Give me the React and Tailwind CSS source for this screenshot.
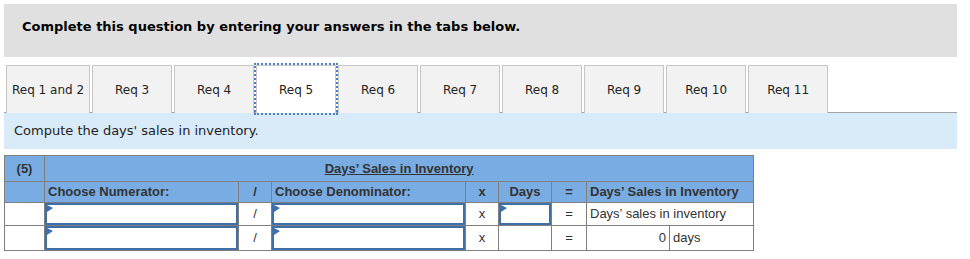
import { useState } from "react";

const tabs = ["Req 1 and 2", "Req 3", "Req 4", "Req 5", "Req 6", "Req 7", "Req 8", "Req 9", "Req 10", "Req 11"];

// little blue flag in the corner of each answer box
function Marker() {
  return (
    <svg className="absolute left-0 top-0" width="6" height="7" viewBox="0 0 6 7">
      <polygon points="0,0 6,3 0,7" fill="#3d6fb0" />
    </svg>
  );
}

function AnswerBox() {
  return (
    <div className="relative h-full w-full border-2 border-[#3f6fa9] bg-white">
      <Marker />
    </div>
  );
}

function App() {
  const [active, setActive] = useState(3);

  return (
    <main className="ml-1 mt-1 w-[953px] bg-white text-[#222]">
      <div className="h-[53px] bg-[#e0e0e0] pl-[18px] pt-[15px] font-['DejaVu_Sans',sans-serif] text-[13px] font-bold leading-[16px] text-black">
        Complete this question by entering your answers in the tabs below.
      </div>

      <div className="mt-2 flex gap-[2px] border-b border-[#a3a3a3] pl-[2px] font-['DejaVu_Sans',sans-serif] text-[12px]">
        {tabs.map((t, i) => (
          <button
            key={t}
            onClick={() => setActive(i)}
            className={
              "-mb-px flex h-[48px] items-center justify-center whitespace-nowrap border border-b-0 border-[#c6c6c6] px-[5px] " +
              (i === 0 ? "min-w-[84px] " : "w-[80px] ") +
              (i === active
                ? "relative z-10 bg-white outline-2 outline-dotted outline-[#4a7fc1]"
                : "bg-[#f2f2f2]")
            }
          >
            {t}
          </button>
        ))}
      </div>

      <div className="flex h-[36px] items-center bg-[#d9ebf9] pl-[10px] font-['DejaVu_Sans',sans-serif] text-[13px]">
        Compute the days' sales in inventory.
      </div>

      <table className="mt-[6px] w-[749px] table-fixed border-collapse font-['Liberation_Sans',Arial,sans-serif] text-[13px] text-[#333]">
        <colgroup>
          <col className="w-[40px]" />
          <col className="w-[194px]" />
          <col className="w-[33px]" />
          <col className="w-[194px]" />
          <col className="w-[33px]" />
          <col className="w-[53px]" />
          <col className="w-[35px]" />
          <col className="w-[83px]" />
          <col className="w-[84px]" />
        </colgroup>
        <tbody>
          <tr className="h-[26px] bg-[#79ace3]">
            <td className="border border-[#7f7f7f] text-center font-bold">(5)</td>
            <td colSpan={8} className="border border-[#7f7f7f] text-center font-bold">
              <span className="underline">Days’ Sales in Inventory</span>
            </td>
          </tr>
          <tr className="h-[21px] bg-[#79ace3] font-bold">
            <td className="border border-[#7f7f7f]"></td>
            <td className="border border-[#7f7f7f] px-[3px]">Choose Numerator:</td>
            <td className="border border-[#7f7f7f] text-center">/</td>
            <td className="border border-[#7f7f7f] px-[3px]">Choose Denominator:</td>
            <td className="border border-[#7f7f7f] text-center">x</td>
            <td className="border border-[#7f7f7f] text-center">Days</td>
            <td className="border border-[#7f7f7f] text-center">=</td>
            <td colSpan={2} className="border border-[#7f7f7f] px-[3px]">Days’ Sales in Inventory</td>
          </tr>
          <tr className="h-[23px]">
            <td className="border border-[#7f7f7f]"></td>
            <td className="h-[23px] border border-[#7f7f7f] p-0"><AnswerBox /></td>
            <td className="border border-[#7f7f7f] text-center">/</td>
            <td className="h-[23px] border border-[#7f7f7f] p-0"><AnswerBox /></td>
            <td className="border border-[#7f7f7f] text-center">x</td>
            <td className="h-[23px] border border-[#7f7f7f] p-0"><AnswerBox /></td>
            <td className="border border-[#7f7f7f] text-center">=</td>
            <td colSpan={2} className="border border-[#7f7f7f] px-[3px]">Days’ sales in inventory</td>
          </tr>
          <tr className="h-[25px]">
            <td className="border border-[#7f7f7f]"></td>
            <td className="h-[25px] border border-[#7f7f7f] p-0"><AnswerBox /></td>
            <td className="border border-[#7f7f7f] text-center">/</td>
            <td className="h-[25px] border border-[#7f7f7f] p-0"><AnswerBox /></td>
            <td className="border border-[#7f7f7f] text-center">x</td>
            <td className="border border-[#7f7f7f]"></td>
            <td className="border border-[#7f7f7f] text-center">=</td>
            <td className="border border-[#7f7f7f] px-[3px] text-right">0</td>
            <td className="border border-[#7f7f7f] px-[3px]">days</td>
          </tr>
        </tbody>
      </table>
    </main>
  );
}

export default App;
